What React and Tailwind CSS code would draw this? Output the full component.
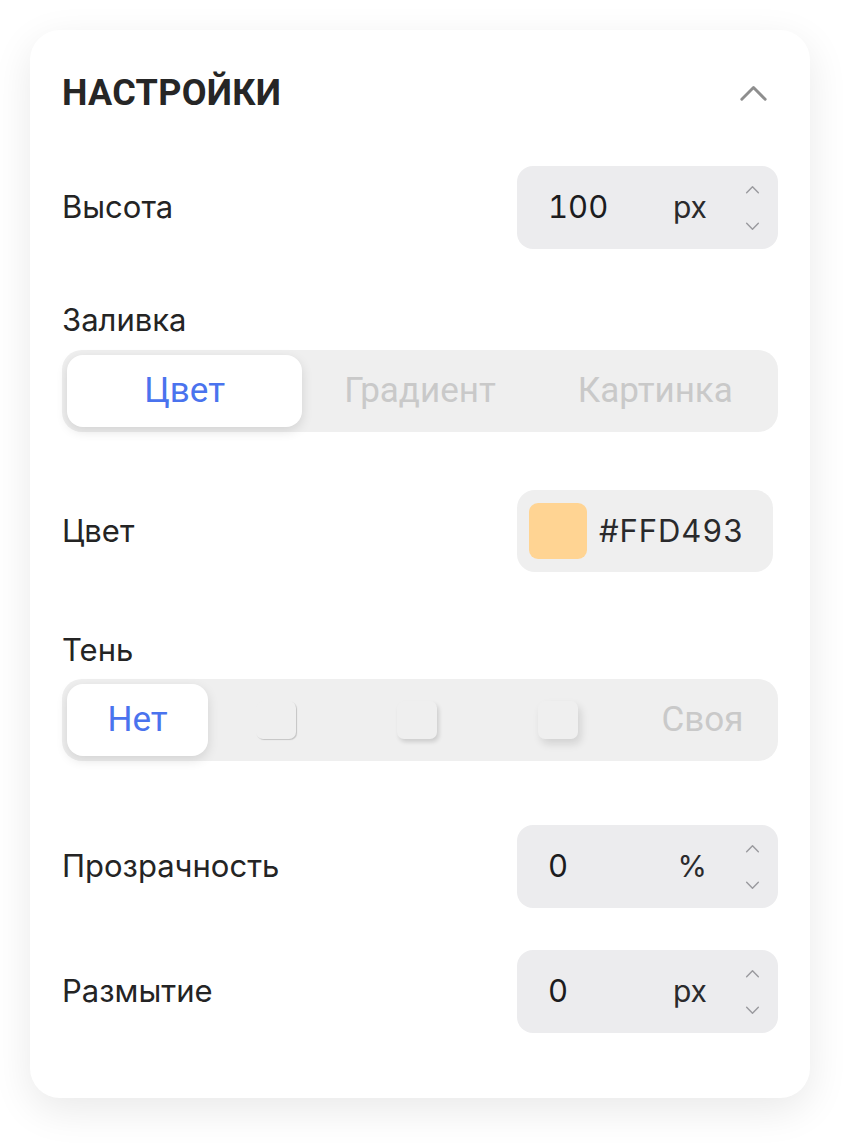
import { useState } from 'react'

const sans = { fontFamily: 'Inter, "Noto Sans", sans-serif' }
const roboto = { fontFamily: 'Roboto, "Noto Sans", sans-serif' }

function Chevron({ dir = 'up', className = '' }) {
  return (
    <svg viewBox="0 0 16 10" fill="none" className={className}>
      <path
        d={dir === 'up' ? 'M1.5 8.5L8 2l6.5 6.5' : 'M1.5 1.5L8 8l6.5-6.5'}
        stroke="currentColor"
        strokeWidth="1.6"
        strokeLinecap="round"
        strokeLinejoin="round"
      />
    </svg>
  )
}

function NumberField({ value, unit }) {
  return (
    <div className="w-[261px] h-[83px] rounded-[16px] bg-[#ececee] flex items-center pl-[31px] pr-[18px]">
      <span className="text-[31px] tabular-nums text-[#1c1c1e] flex-1">{value}</span>
      <span className="text-[30px] text-[#2a2a2c] mr-[38px]">{unit}</span>
      <div className="flex flex-col gap-[28px] text-[#9a9a9e]">
        <Chevron dir="up" className="w-[15px] h-[9px]" />
        <Chevron dir="down" className="w-[15px] h-[9px]" />
      </div>
    </div>
  )
}

function Row({ label, children, className = '' }) {
  return (
    <div className={`flex items-center justify-between ${className}`}>
      <span className="text-[31px] text-[#242424]">{label}</span>
      {children}
    </div>
  )
}

function Segmented({ items, active, onChange, className = '' }) {
  return (
    <div className={`h-[82px] rounded-[20px] bg-[#efefef] p-[5px] flex ${className}`}>
      {items.map((item, i) => (
        <button
          key={i}
          onClick={() => onChange(i)}
          className={`flex-1 flex items-center justify-center rounded-[16px] text-[35px] ${
            i === active
              ? 'bg-white text-[#4a73ee] shadow-[0_4px_12px_rgba(0,0,0,0.12)]'
              : 'text-[#c9c9c9]'
          }`}
          style={roboto}
        >
          {item}
        </button>
      ))}
    </div>
  )
}

const shadowIcons = [
  <div key="s1" className="w-[40px] h-[38px] rounded-[7px] bg-[#efefef] shadow-[1px_1px_1px_rgba(0,0,0,0.18)] -ml-[6px]" />,
  <div key="s2" className="w-[40px] h-[38px] rounded-[7px] bg-[#efefef] shadow-[2px_3px_4px_rgba(0,0,0,0.14)] -ml-[6px]" />,
  <div key="s3" className="w-[40px] h-[38px] rounded-[7px] bg-[#efefef] shadow-[3px_5px_9px_rgba(0,0,0,0.12)] -ml-[6px]" />,
]

export default function App() {
  const [fill, setFill] = useState(0)
  const [shadow, setShadow] = useState(0)

  return (
    <div className="min-h-screen bg-white pt-[30px] pl-[30px]" style={sans}>
      <div className="w-[780px] h-[1068px] rounded-[30px] bg-white shadow-[0_12px_40px_rgba(0,0,0,0.09)] px-[32px] pt-[43px] flex flex-col">
        <div className="h-[40px] flex items-center justify-between">
          <h1 className="text-[36px] font-bold text-[#262626] tracking-[0.3px]" style={roboto}>
            НАСТРОЙКИ
          </h1>
          <Chevron dir="up" className="w-[33px] h-[18px] mr-[8px] text-[#8e8e8e]" />
        </div>

        <Row label="Высота" className="mt-[53px]">
          <NumberField value="100" unit="px" />
        </Row>

        <div className="mt-[55px] h-[32px] flex items-center text-[31px] text-[#242424]">Заливка</div>
        <Segmented
          className="mt-[14px]"
          items={['Цвет', 'Градиент', 'Картинка']}
          active={fill}
          onChange={setFill}
        />

        <Row label="Цвет" className="mt-[58px]">
          <div className="w-[256px] h-[82px] rounded-[18px] bg-[#efefef] flex items-center pl-[12px] gap-[12px] mr-[5px]">
            <div className="w-[58px] h-[56px] rounded-[9px] bg-[#ffd493]" />
            <span className="text-[31px] tabular-nums text-[#2a2a2c] tracking-[0.9px]">#FFD493</span>
          </div>
        </Row>

        <div className="mt-[62px] h-[32px] flex items-center text-[31px] text-[#242424]">Тень</div>
        <Segmented
          className="mt-[13px]"
          items={['Нет', ...shadowIcons, 'Своя']}
          active={shadow}
          onChange={setShadow}
        />

        <Row label="Прозрачность" className="mt-[64px]">
          <NumberField value="0" unit="%" />
        </Row>

        <Row label="Размытие" className="mt-[42px]">
          <NumberField value="0" unit="px" />
        </Row>
      </div>
    </div>
  )
}
